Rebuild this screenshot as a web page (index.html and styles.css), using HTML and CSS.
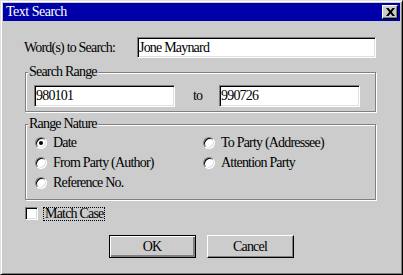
FILE: index.html
```html
<!DOCTYPE html>
<html lang="en">
<head>
    <meta charset="UTF-8">
    <title>Text Search</title>
    <link rel="stylesheet" href="styles.css">
</head>
<body>
    <div class="window">
        <div class="titlebar">
            <span class="title">Text Search</span>
            <span class="close">
                <svg width="9" height="8" viewBox="0 0 9 8">
                    <path d="M0 0h2.5l2 2.6l2-2.6h2.5l-3.2 4l3.2 4h-2.5l-2-2.6l-2 2.6h-2.5l3.2-4z" fill="#000"/>
                </svg>
            </span>
        </div>

        <div class="content">
            <div class="words-row">
                <label class="words-label">Word(s) to Search:</label>
                <input class="field words-field" type="text" value="Jone Maynard">
            </div>

            <div class="group range-group">
                <span class="group-label">Search Range</span>
                <input class="field" type="text" value="980101">
                <span class="to">to</span>
                <input class="field" type="text" value="990726">
            </div>

            <div class="group nature-group">
                <span class="group-label">Range Nature</span>
                <div class="option"><span class="radio checked"></span>Date</div>
                <div class="option"><span class="radio"></span>To Party (Addressee)</div>
                <div class="option"><span class="radio"></span>From Party (Author)</div>
                <div class="option"><span class="radio"></span>Attention Party</div>
                <div class="option"><span class="radio"></span>Reference No.</div>
            </div>

            <div class="check-row">
                <span class="checkbox"></span>
                <span class="focus">Match Case</span>
            </div>

            <div class="buttons">
                <button class="btn default">OK</button>
                <button class="btn">Cancel</button>
            </div>
        </div>
    </div>
</body>
</html>
```

FILE: styles.css
```css
body {
    margin: 0;
    font-family: "Liberation Serif", "DejaVu Serif", serif;
    font-size: 14px;
    letter-spacing: -0.8px;
    color: #000;
}
.window {
    width: 403px;
    height: 275px;
    box-sizing: border-box;
    padding: 2px;
    background: #cccccc;
    border: 1px solid;
    border-color: #dfdfdf #000 #000 #dfdfdf;
    box-shadow: inset 1px 1px #fff, inset -1px -1px #808080;
}
.titlebar {
    height: 18px;
    background: #0000a8;
    color: #fff;
    display: flex;
    align-items: center;
    justify-content: space-between;
    padding: 0 2px 0 3px;
}
.title {
    letter-spacing: -0.5px;
}
.close {
    width: 14px;
    height: 12px;
    background: #cccccc;
    border: 1px solid;
    border-color: #fff #000 #000 #fff;
    box-shadow: inset -1px -1px #808080;
    display: flex;
    align-items: center;
    justify-content: center;
}
.content {
    padding: 16px 23px 0 22px;
}
.words-row {
    display: flex;
    align-items: center;
}
.words-label {
    width: 113px;
    margin-left: -1px;
}
.field {
    box-sizing: border-box;
    height: 22px;
    margin: 0;
    padding: 0 1px;
    font: inherit;
    letter-spacing: inherit;
    color: #000;
    background: #fff;
    border: 1px solid;
    border-color: #808080 #fff #fff #808080;
    box-shadow: inset 1px 1px #000, inset -1px -1px #dfdfdf;
    outline: none;
}
.words-field {
    width: 239px;
    height: 21px;
}
.group {
    position: relative;
    box-sizing: border-box;
    width: 351px;
    border: 1px solid #808080;
    box-shadow: inset 1px 1px #fff, 1px 1px #fff;
}
.group-label {
    position: absolute;
    top: -9px;
    left: 2px;
    padding: 0 1px;
    background: #cccccc;
    line-height: 15px;
}
.range-group {
    margin-top: 14px;
    height: 40px;
    padding: 8px 0 0 8px;
    display: grid;
    grid-template-columns: 141px 44px 141px;
    align-items: center;
}
.to {
    padding-left: 18px;
}
.nature-group {
    margin-top: 12px;
    height: 76px;
    padding: 8px 0 0 9px;
    display: grid;
    grid-template-columns: 168px 1fr;
    grid-auto-rows: 20px;
}
.option {
    display: flex;
    align-items: center;
    gap: 6px;
}
.radio {
    position: relative;
    width: 10px;
    height: 10px;
    border-radius: 50%;
    background: #fff;
    border: 1px solid;
    border-color: #808080 #fff #fff #808080;
    box-shadow: inset 1px 1px #000, inset -1px -1px #dfdfdf;
}
.radio.checked::after {
    content: "";
    position: absolute;
    left: 3px;
    top: 3px;
    width: 4px;
    height: 4px;
    border-radius: 50%;
    background: #000;
}
.check-row {
    margin-top: 7px;
    display: flex;
    align-items: center;
    gap: 6px;
}
.checkbox {
    box-sizing: border-box;
    width: 13px;
    height: 13px;
    background: #fff;
    border: 1px solid;
    border-color: #808080 #fff #fff #808080;
    box-shadow: inset 1px 1px #000, inset -1px -1px #dfdfdf;
}
.focus {
    outline: 1px dotted #000;
    padding: 0 1px;
    line-height: 12px;
}
.buttons {
    margin-top: 15px;
    display: flex;
    justify-content: center;
    gap: 11px;
}
.btn {
    box-sizing: border-box;
    width: 87px;
    height: 23px;
    margin: 0;
    padding: 0;
    font: inherit;
    letter-spacing: inherit;
    color: #000;
    background: #cccccc;
    border: 1px solid;
    border-color: #fff #000 #000 #fff;
    box-shadow: inset -1px -1px #808080;
}
.btn.default {
    border: 1px solid #000;
    box-shadow: inset 1px 1px #fff, inset -2px -2px #808080;
}
```
